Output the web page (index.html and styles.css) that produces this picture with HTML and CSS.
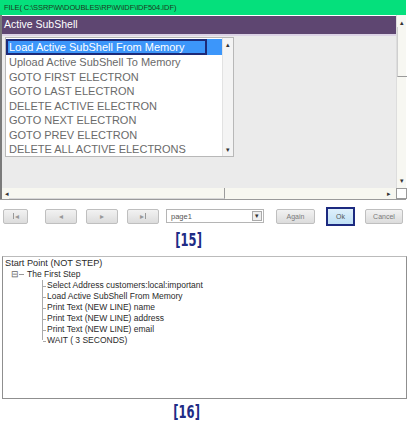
FILE: index.html
```html
<!DOCTYPE html>
<html>
<head>
<meta charset="utf-8">
<link rel="stylesheet" href="styles.css">
</head>
<body>
<div class="page">
  <div class="filebar">FILE( C:\SSRP\W\DOUBLES\RP\W\IDF\IDF504.IDF)</div>
  <div class="window">
    <div class="main">
      <div class="title">Active SubShell</div>
      <div class="content">
        <div class="listbox">
          <ul class="items">
            <li class="sel"><span>Load Active SubShell From Memory</span></li>
            <li>Upload Active SubShell To Memory</li>
            <li>GOTO FIRST ELECTRON</li>
            <li>GOTO LAST ELECTRON</li>
            <li>DELETE ACTIVE ELECTRON</li>
            <li>GOTO NEXT ELECTRON</li>
            <li>GOTO PREV ELECTRON</li>
            <li>DELETE ALL ACTIVE ELECTRONS</li>
          </ul>
          <div class="lscroll"><span class="arr">▴</span><span class="arr">▾</span></div>
        </div>
      </div>
      <div class="hscroll">
        <span class="arr">◂</span>
        <div class="hthumb"></div>
        <span class="arr right">▸</span>
      </div>
    </div>
    <div class="vscroll">
      <span class="arr vtop">▴</span>
      <div class="vthumb"></div>
      <span class="arr vbot">▾</span>
      <div class="corner"></div>
    </div>
  </div>
  <div class="toolbar">
    <button class="nav first"><span class="bar"></span>◂</button>
    <button class="nav">◂</button>
    <button class="nav">▸</button>
    <button class="nav">▸<span class="bar"></span></button>
    <div class="select"><span>page1</span><span class="drop">▾</span></div>
    <button class="btn again">Again</button>
    <button class="btn ok">Ok</button>
    <button class="btn cancel">Cancel</button>
  </div>
  <div class="caption c15"><span>[15]</span></div>
  <div class="tree">
    <div class="t-root">Start Point (NOT STEP)</div>
    <div class="t-step"><span class="minus">⊟</span><span class="dash"></span>The First Step</div>
    <ul class="t-kids">
      <li>Select Address customers:local:important</li>
      <li>Load Active SubShell From Memory</li>
      <li>Print Text (NEW LINE) name</li>
      <li>Print Text (NEW LINE) address</li>
      <li>Print Text (NEW LINE) email</li>
      <li>WAIT ( 3 SECONDS)</li>
    </ul>
  </div>
  <div class="caption c16"><span>[16]</span></div>
</div>
</body>
</html>
```

FILE: styles.css
```css
* { box-sizing: border-box; }
html, body { margin: 0; padding: 0; background: #fff; }
body { font-family: "Liberation Sans", Arial, sans-serif; }
.page { width: 409px; height: 429px; position: relative; }

.filebar {
  width: 406px; height: 15px;
  background: #05e07c;
  color: #1c3a1c;
  font-size: 7.5px;
  line-height: 15px;
  padding-left: 4px;
  letter-spacing: -0.1px;
}

.window {
  display: flex;
  width: 406px;
  height: 185px;
  border-bottom: 1px solid #9a9a9a;
}
.main {
  width: 396px;
  display: flex; flex-direction: column;
  border-left: 2px solid #7a7a7a;
}
.title {
  height: 20px;
  background: #5e4671;
  border-bottom: 2px solid #dcd3e6;
  color: #fff;
  font-size: 10.5px;
  line-height: 17px;
  padding-left: 2px;
  margin-top: 1px;
}
.content {
  flex: 1;
  background: #ebebeb;
  padding: 1px 0 0 3px;
}
.listbox {
  width: 229px; height: 120px;
  background: #fff;
  border: 1px solid #b8b8b8;
  display: flex;
}
.items {
  list-style: none; margin: 0; padding: 1px 0 0 0;
  flex: 1;
  font-size: 11px;
  color: #6a6a6a;
}
.items li {
  height: 14.5px;
  line-height: 14.5px;
  padding-left: 3px;
  white-space: nowrap;
}
.items li.sel {
  background: #3c96fa;
  color: #fff;
  padding-left: 0;
  height: 16px;
  line-height: 13px;
}
.items li.sel span {
  display: inline-block;
  width: 201px;
  height: 16px;
  border: 2px solid #1d2a78;
  padding-left: 1px;
}
.lscroll {
  width: 11px;
  border-left: 1px solid #e2e2e2;
  background: #f4f4f4;
  display: flex; flex-direction: column; justify-content: space-between;
  align-items: center;
  padding: 3px 0 2px;
}
.arr { font-size: 7px; color: #333; line-height: 8px; }

.hscroll {
  height: 11px;
  background: #f7f7f0;
  display: flex; align-items: center;
  padding-left: 3px;
}
.hthumb {
  width: 216px; height: 11px;
  border-right: 1px solid #9c9c9c;
  border-bottom: 1px solid #d8d8d8;
}
.hscroll .right { margin-left: auto; margin-right: 5px; }

.vscroll {
  width: 10px;
  background: #f7f7f2;
  border-left: 1px solid #ddd;
  display: flex; flex-direction: column; align-items: center;
  position: relative;
}
.vtop { margin-top: 4px; }
.vthumb {
  width: 10px; height: 50px;
  border-bottom: 1px solid #9a9a9a;
  border-left: 1px solid #cfcfcf;
}
.vbot { margin-top: auto; margin-bottom: 14px; }
.corner {
  position: absolute; left: -1px; bottom: 0;
  width: 11px; height: 11px;
  border: 1px solid #9a9a9a;
  background: #fff;
}

.toolbar {
  display: flex; align-items: center;
  height: 20px;
  margin-top: 6px;
  padding-left: 3px;
}
button {
  font-family: "Liberation Sans", Arial, sans-serif;
  background: linear-gradient(#f2f2f2, #dcdcdc);
  border: 1px solid #bfbfbf;
  border-radius: 2px;
  height: 15px;
  padding: 0;
  color: #7a7a7a;
  font-size: 7px;
  display: flex; align-items: center; justify-content: center;
}
.nav { width: 32px; margin-right: 9px; font-size: 8px; color: #999; }
.nav.first { width: 25px; margin-right: 17px; }
.nav .bar { display: inline-block; width: 1px; height: 6px; background: #999; margin: 0 1px; }
.select {
  width: 98px; height: 14px;
  margin-left: -2px;
  border: 1px solid #b5b5b5;
  background: #fff;
  font-size: 7.5px;
  color: #555;
  display: flex; align-items: center; justify-content: space-between;
  padding-left: 4px;
}
.drop {
  width: 10px; height: 10px; margin-right: 1px;
  border: 1px solid #aaa;
  background: #eee;
  font-size: 7px; line-height: 8px; text-align: center; color: #333;
}
.again { width: 39px; margin-left: 12px; }
.ok {
  width: 29px; height: 19px;
  margin-left: 11px;
  border: 2px solid #1c2a80;
  border-radius: 0;
  background: linear-gradient(#dff0fb, #bfe0f5);
  color: #555;
}
.cancel { width: 38px; margin-left: 10px; }

.caption {
  font-family: "DejaVu Sans", sans-serif;
  font-weight: bold;
  color: #202b85;
  font-size: 17px;
  line-height: 18px;
  text-align: center;
}
.caption span { display: inline-block; transform: scaleX(0.68); }
.c15 { margin-top: 5px; padding-right: 31px; }
.c16 { margin-top: 4px; padding-right: 36px; }

.tree {
  margin-top: 7px;
  margin-left: 2px;
  width: 405px; height: 143px;
  border: 1px solid #8f8f8f;
  border-top-color: #bbb;
  font-size: 8.5px;
  color: #2a2a2a;
  padding: 1px 0 0 2px;
  line-height: 11px;
}
.t-root { font-size: 9.2px; }
.t-step { padding-left: 6px; display: flex; align-items: center; }
.minus { font-size: 9px; color: #666; width: 7px; }
.dash { display: inline-block; width: 5px; border-top: 1px solid #999; margin: 0 3px 0 1px; }
.t-kids {
  list-style: none; margin: 0 0 0 37px; padding: 0;
  border-left: 1px solid #aaa;
  height: 60px;
}
.t-kids li { position: relative; padding-left: 4px; height: 11px; }
.t-kids li::before {
  content: ""; position: absolute; left: 0; top: 6px; width: 3px;
  border-top: 1px solid #aaa;
}
```
